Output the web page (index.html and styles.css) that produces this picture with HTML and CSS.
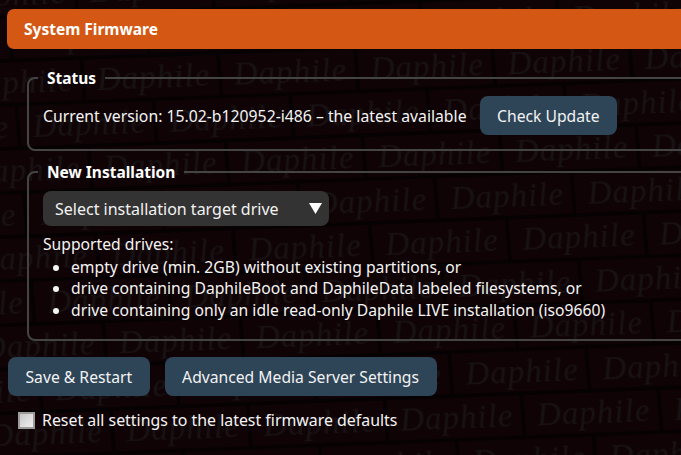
FILE: index.html
```html
<!DOCTYPE html>
<html lang="en">
<head>
<meta charset="utf-8">
<title>System Firmware</title>
<link rel="stylesheet" href="styles.css">
</head>
<body>
<svg class="watermark" aria-hidden="true" width="681" height="455">
  <defs>
    <pattern id="bricks" width="137" height="88" patternUnits="userSpaceOnUse" patternTransform="translate(81 58) rotate(-2.2) skewX(2.6)">
      <rect class="brick" x="2" y="2" width="133" height="40"/>
      <rect class="brick" x="-66.5" y="46" width="133" height="40"/>
      <rect class="brick" x="70.5" y="46" width="133" height="40"/>
      <text class="mark" x="14" y="33">Daphile</text>
      <text class="mark" x="-54" y="77">Daphile</text>
      <text class="mark" x="83" y="77">Daphile</text>
    </pattern>
  </defs>
  <rect width="681" height="455" fill="url(#bricks)"/>
</svg>
<main class="page">
  <h1 class="title">System Firmware</h1>
  <fieldset class="group group-status">
    <legend>Status</legend>
    <div class="status-row">
      <span class="status-text">Current version: 15.02-b120952-i486 – the latest available</span>
      <button class="btn" type="button">Check Update</button>
    </div>
  </fieldset>
  <fieldset class="group group-install">
    <legend>New Installation</legend>
    <div class="select">
      <span>Select installation target drive</span>
      <svg class="arrow" width="13" height="11" viewBox="0 0 13 11" aria-hidden="true"><path d="M0 0H13L6.5 11Z" fill="#fff"/></svg>
    </div>
    <p class="note">Supported drives:</p>
    <ul class="drives">
      <li>empty drive (min. 2GB) without existing partitions, or</li>
      <li>drive containing DaphileBoot and DaphileData labeled filesystems, or</li>
      <li>drive containing only an idle read-only Daphile LIVE installation (iso9660)</li>
    </ul>
  </fieldset>
  <div class="actions">
    <button class="btn btn-save" type="button">Save &amp; Restart</button>
    <button class="btn btn-adv" type="button">Advanced Media Server Settings</button>
  </div>
  <label class="reset"><input type="checkbox"><span>Reset all settings to the latest firmware defaults</span></label>
</main>
</body>
</html>
```
FILE: styles.css
```css
html, body {
  margin: 0;
  padding: 0;
  width: 681px;
  height: 455px;
  overflow: hidden;
  background: #060102;
}
body {
  position: relative;
  color: #f4f4f4;
  font-family: "Noto Sans", sans-serif;
  font-size: 15.7px;
}
.watermark {
  position: absolute;
  left: 0;
  top: 0;
}
.brick { fill: #100305; }
.mark {
  fill: #171214;
  font-family: "Liberation Serif", serif;
  font-style: italic;
  font-size: 33px;
  letter-spacing: 1px;
}
.page {
  position: relative;
  width: 720px;
  height: 455px;
  overflow: hidden;
  padding: 9px 0 0 7px;
  box-sizing: border-box;
}
.title {
  margin: 0;
  height: 40px;
  line-height: 40px;
  padding-left: 17px;
  font-size: 15.5px;
  font-weight: 700;
  color: #fff;
  background: #d45813;
  border-radius: 7px;
}
.group {
  margin: 20px 0 0 20px;
  padding: 0 14px;
  border: 2px solid #444;
  border-radius: 8px;
  min-width: 0;
  box-sizing: border-box;
}
.group legend {
  margin-left: -5px;
  padding: 0 9px;
  font-size: 15.5px;
  font-weight: 700;
  color: #fff;
  line-height: 20px;
}
.group-status { height: 83px; margin-top: 19px; }
.group-install { height: 179px; margin-top: 11px; }
.status-row {
  display: flex;
  align-items: center;
  gap: 13px;
  margin-top: 8px;
}
.status-text { font-size: 15.77px; padding-top: 1px; }
.btn {
  height: 39px;
  padding: 0 17.5px;
  border: 0;
  border-radius: 8px;
  background: #2e4558;
  color: #f2f2f2;
  font: 15.7px "Noto Sans", sans-serif;
}
.select {
  width: 286px;
  height: 35px;
  margin-top: 9px;
  box-sizing: border-box;
  padding: 0 7px 0 12px;
  display: flex;
  align-items: center;
  justify-content: space-between;
  background: #333;
  border-radius: 8px;
  color: #f2f2f2;
  font-size: 16px;
}
.note { margin: 8px 0 0; line-height: 21px; }
.drives {
  margin: 2px 0 0;
  padding: 0 0 0 28px;
  line-height: 21.3px;
}
.actions {
  display: flex;
  gap: 15px;
  margin: 16px 0 0 1px;
}
.reset {
  display: flex;
  align-items: center;
  margin: 13px 0 0 11px;
  font-size: 15.9px;
}
.reset input {
  appearance: none;
  width: 17px;
  height: 17px;
  margin: 0 7px 0 0;
  box-sizing: border-box;
  border: 2px solid #9c9c9c;
  background: linear-gradient(135deg, #c8c8c8, #f0f0f0);
}
```
